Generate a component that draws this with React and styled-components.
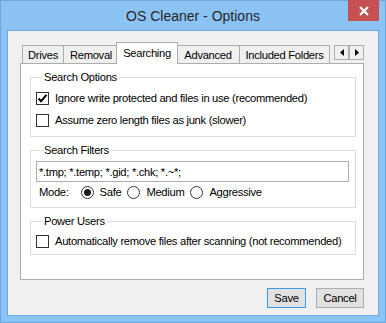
import React from 'react';
import styled, { createGlobalStyle } from 'styled-components';

const Global = createGlobalStyle`
  html, body { margin: 0; padding: 0; background: #ffffff; }
  body { font-family: "Liberation Sans", Arial, sans-serif; }
  * { box-sizing: border-box; }
`;

const Window = styled.div`
  width: 386px;
  height: 323px;
  background: #8bc3f5;
  border: 1px solid #6ea7de;
  padding: 0 6px 6px;
  display: flex;
  flex-direction: column;
`;

const TitleBar = styled.div`
  height: 29px;
  display: grid;
  grid-template-columns: 1fr auto 1fr;
  align-items: center;
`;

const Title = styled.div`
  grid-column: 2;
  font-size: 14px;
  color: #262626;
  padding-top: 1px;
`;

const CloseButton = styled.div`
  grid-column: 3;
  justify-self: end;
  align-self: start;
  margin-top: -1px;
  width: 31px;
  height: 21px;
  background: #c75050;
  display: flex;
  align-items: center;
  justify-content: center;
`;

const Client = styled.div`
  flex: 1;
  background: #f0f0f0;
  border: 1px solid #6ea7de;
  padding: 11px 14px 7px 12px;
  display: flex;
  flex-direction: column;
  font-size: 11.2px;
  letter-spacing: -0.3px;
  color: #000;
`;

const TabStrip = styled.div`
  height: 21px;
  display: flex;
  align-items: flex-end;
  padding-left: 2px;
`;

const Tab = styled.div`
  position: relative;
  width: ${p => p.w}px;
  margin-left: ${p => p.ml || 0}px;
  height: ${p => (p.active ? 22 : 18)}px;
  margin-bottom: ${p => (p.active ? -1 : 0)}px;
  z-index: ${p => (p.active ? 2 : 1)};
  background: ${p => (p.active ? '#ffffff' : '#f0f0f0')};
  border: 1px solid #acacac;
  border-bottom: none;
  display: flex;
  align-items: center;
  justify-content: center;
  white-space: nowrap;
  padding-bottom: ${p => (p.active ? 2 : 0)}px;
  padding-top: ${p => (p.active ? 0 : 1)}px;
`;

const Arrows = styled.div`
  margin-left: auto;
  align-self: flex-start;
  margin-top: 3px;
  display: flex;
`;

const ArrowButton = styled.div`
  width: 15px;
  height: 15px;
  background: #f0f0f0;
  border: 1px solid #acacac;
  display: flex;
  align-items: center;
  justify-content: center;
`;

const Panel = styled.div`
  height: 217px;
  background: #ffffff;
  border: 1px solid #adadad;
  padding: 0 7px 0 9px;
  display: flex;
  flex-direction: column;
`;

const Group = styled.fieldset`
  margin: 6px 0 0;
  border: 1px solid #dcdcdc;
  padding: ${p => p.pad};
  min-width: 0;
`;

const Legend = styled.legend`
  font-size: 11.2px;
  line-height: 15px;
  padding: 0 2px;
  margin-left: 6px;
`;

const Row = styled.label`
  height: ${p => p.h || 22}px;
  display: flex;
  align-items: center;
  gap: 6px;
  white-space: nowrap;
`;

const Box = styled.span`
  width: 13px;
  height: 13px;
  border: 1px solid #333333;
  background: #ffffff;
  display: flex;
  align-items: center;
  justify-content: center;
  flex: none;
`;

const Radio = styled(Box)`
  border-radius: 50%;
`;

const Dot = styled.span`
  width: 7px;
  height: 7px;
  border-radius: 50%;
  background: #1a1a1a;
`;

const TextInput = styled.div`
  margin-top: 3px;
  height: 21px;
  border: 1px solid #abadb3;
  background: #ffffff;
  display: flex;
  align-items: center;
  padding-left: 2px;
  white-space: nowrap;
`;

const ModeLabel = styled.span`
  margin-left: 3px;
  margin-right: 6px;
`;

const RadioItem = styled.span`
  display: flex;
  align-items: center;
  gap: 6px;
`;

const Footer = styled.div`
  margin-top: 8px;
  display: flex;
  justify-content: flex-end;
  gap: 10px;
`;

const Button = styled.div`
  width: ${p => p.w}px;
  height: 20px;
  background: #e1e1e1;
  border: 1px solid ${p => (p.focused ? '#3d99e8' : '#adadad')};
  display: flex;
  align-items: center;
  justify-content: center;
`;

const Check = () => (
  <svg width="11" height="11" viewBox="0 0 11 11">
    <path d="M1.5 5.5 L4 8.2 L9.5 1.8" fill="none" stroke="#000" strokeWidth="2" />
  </svg>
);

export default function App() {
  return (
    <>
      <Global />
      <Window>
        <TitleBar>
          <Title>OS Cleaner - Options</Title>
          <CloseButton>
            <svg width="10" height="10" viewBox="0 0 10 10">
              <path d="M1 1 L9 9 M9 1 L1 9" stroke="#fff" strokeWidth="2.2" />
            </svg>
          </CloseButton>
        </TitleBar>
        <Client>
          <TabStrip>
            <Tab w={42}>Drives</Tab>
            <Tab w={56} ml={-1}>Removal</Tab>
            <Tab w={62} ml={-3} active>Searching</Tab>
            <Tab w={64} ml={-2}>Advanced</Tab>
            <Tab w={91} ml={-1}>Included Folders</Tab>
            <Arrows>
              <ArrowButton>
                <svg width="4" height="7" viewBox="0 0 4 7"><path d="M4 0 L0 3.5 L4 7 Z" fill="#000" /></svg>
              </ArrowButton>
              <ArrowButton>
                <svg width="4" height="7" viewBox="0 0 4 7"><path d="M0 0 L4 3.5 L0 7 Z" fill="#000" /></svg>
              </ArrowButton>
            </Arrows>
          </TabStrip>
          <Panel>
            <Group pad="2px 6px 5px 5px">
              <Legend>Search Options</Legend>
              <Row>
                <Box><Check /></Box>
                Ignore write protected and files in use (recommended)
              </Row>
              <Row>
                <Box />
                Assume zero length files as junk (slower)
              </Row>
            </Group>
            <Group pad="0 6px 5px 5px">
              <Legend>Search Filters</Legend>
              <TextInput>*.tmp; *.temp; *.gid; *.chk; *.~*;</TextInput>
              <Row h={20} as="div">
                <ModeLabel>Mode:</ModeLabel>
                <RadioItem><Radio><Dot /></Radio>Safe</RadioItem>
                <RadioItem><Radio />Medium</RadioItem>
                <RadioItem><Radio />Aggressive</RadioItem>
              </Row>
            </Group>
            <Group pad="1px 6px 2px 5px">
              <Legend>Power Users</Legend>
              <Row>
                <Box />
                Automatically remove files after scanning (not recommended)
              </Row>
            </Group>
          </Panel>
          <Footer>
            <Button w={39} focused>Save</Button>
            <Button w={48}>Cancel</Button>
          </Footer>
        </Client>
      </Window>
    </>
  );
}
